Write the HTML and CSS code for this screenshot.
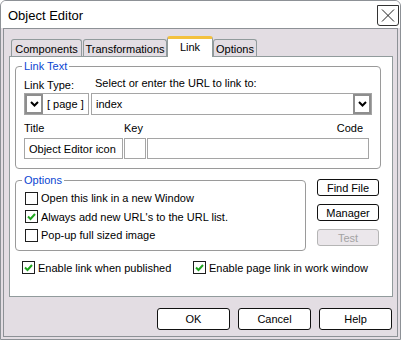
FILE: index.html
```html
<!DOCTYPE html>
<html lang="en">
<head>
  <meta charset="UTF-8">
  <title>Object Editor</title>
  <link rel="stylesheet" href="styles.css">
</head>
<body>

<div class="window">
  <div class="titlebar">
    <span class="title">Object Editor</span>
    <span class="close">
      <svg width="20" height="19" viewBox="0 0 20 19"><path d="M4 3.5 L16 15.5 M16 3.5 L4 15.5" stroke="#222" stroke-width="1" fill="none"/></svg>
    </span>
  </div>

  <div class="frame">
    <div class="tabs">
      <div class="tab tab-components">Components</div>
      <div class="tab tab-transform">Transformations</div>
      <div class="tab tab-active">Link</div>
      <div class="tab tab-options">Options</div>
    </div>

    <div class="panel">
      <fieldset class="group group-link">
        <legend>Link Text</legend>
        <div class="link-grid">
          <span class="lbl lbl-type">Link Type:</span>
          <span class="lbl lbl-url">Select or enter the URL to link to:</span>
          <div class="select">
            <span class="drop"><svg width="9" height="6" viewBox="0 0 9 6"><path d="M1 1 L4.5 4.5 L8 1" stroke="#000" stroke-width="2" fill="none"/></svg></span>
            <span class="select-text">[ page ]</span>
          </div>
          <div class="select">
            <span class="select-text">index</span>
            <span class="drop"><svg width="9" height="6" viewBox="0 0 9 6"><path d="M1 1 L4.5 4.5 L8 1" stroke="#000" stroke-width="2" fill="none"/></svg></span>
          </div>
        </div>
        <div class="field-grid">
          <span class="lbl">Title</span>
          <span class="lbl">Key</span>
          <span class="lbl lbl-code">Code</span>
          <div class="input">Object Editor icon</div>
          <div class="input"></div>
          <div class="input"></div>
        </div>
      </fieldset>

      <div class="options-row">
        <fieldset class="group group-options">
          <legend>Options</legend>
          <div class="check">
            <span class="box"></span>
            <span>Open this link in a new Window</span>
          </div>
          <div class="check">
            <span class="box"><svg width="11" height="11" viewBox="0 0 11 11"><path d="M2 5.5 L4.5 8 L9 3" stroke="#1fa51f" stroke-width="2" fill="none"/></svg></span>
            <span>Always add new URL's to the URL list.</span>
          </div>
          <div class="check">
            <span class="box"></span>
            <span>Pop-up full sized image</span>
          </div>
        </fieldset>

        <div class="side-buttons">
          <button class="btn btn-small">Find File</button>
          <button class="btn btn-small">Manager</button>
          <button class="btn btn-small btn-disabled">Test</button>
        </div>
      </div>

      <div class="enable-row">
        <div class="check check-first">
          <span class="box"><svg width="11" height="11" viewBox="0 0 11 11"><path d="M2 5.5 L4.5 8 L9 3" stroke="#1fa51f" stroke-width="2" fill="none"/></svg></span>
          <span>Enable link when published</span>
        </div>
        <div class="check">
          <span class="box"><svg width="11" height="11" viewBox="0 0 11 11"><path d="M2 5.5 L4.5 8 L9 3" stroke="#1fa51f" stroke-width="2" fill="none"/></svg></span>
          <span>Enable page link in work window</span>
        </div>
      </div>
    </div>

    <div class="footer">
      <button class="btn btn-big">OK</button>
      <button class="btn btn-big">Cancel</button>
      <button class="btn btn-big">Help</button>
    </div>
  </div>
</div>

</body>
</html>
```

FILE: styles.css
```css
body {
  margin: 0;
  font-family: "Liberation Sans", Arial, sans-serif;
  font-size: 11px;
  color: #000;
}
.window {
  width: 401px;
  height: 340px;
  box-sizing: border-box;
  border: 1px solid #8d9196;
  border-radius: 6px 6px 0 0;
  background-color: #e3dde3;
  display: flex;
  flex-direction: column;
  overflow: hidden;
}
.titlebar {
  height: 27px;
  flex: none;
  background-color: #fff;
  display: flex;
  align-items: center;
  justify-content: space-between;
  padding-left: 7px;
}
.title {
  font-size: 13px;
  margin-top: 2px;
}
.close {
  width: 20px;
  height: 19px;
  margin-right: 1px;
  margin-top: 1px;
  border: 1px solid #333;
  border-radius: 0 0 3px 3px;
  display: flex;
}
.frame {
  flex: 1;
  margin: 0 2px 2px;
  border: 1px solid #8d9196;
  padding: 7px 4px 0 5px;
  display: flex;
  flex-direction: column;
}
.tabs {
  height: 20px;
  display: flex;
  align-items: flex-end;
  padding-left: 2px;
}
.tab {
  height: 17px;
  box-sizing: border-box;
  border: 1px solid #919b9c;
  border-bottom: none;
  border-radius: 3px 3px 0 0;
  display: flex;
  align-items: center;
  justify-content: center;
  padding-top: 1px;
}
.tab-components {
  width: 71px;
  margin-right: 1px;
}
.tab-transform {
  width: 84px;
}
.tab-active {
  width: 46px;
  height: 21px;
  margin-bottom: -1px;
  background-color: #fff;
  border-top: 3px solid #f3c13f;
  padding: 0 0 3px;
  position: relative;
  z-index: 1;
}
.tab-options {
  width: 44px;
}
.panel {
  height: 241px;
  box-sizing: border-box;
  background-color: #fff;
  border: 1px solid #919b9c;
}
.group {
  margin: 0;
  min-width: 0;
  border: 1px solid #9a9a9a;
  border-radius: 4px;
}
.group legend {
  color: #0a45d2;
  padding: 0 2px;
  margin-left: -3px;
  line-height: 13px;
}
.group-link {
  margin: 3px 11px 0 5px;
  padding: 0 0 9px 8px;
}
.group-link legend {
  margin-left: -2px;
}
.link-grid {
  display: grid;
  grid-template-columns: 65px 281px;
  grid-template-rows: 20px 22px;
  column-gap: 2px;
}
.lbl {
  line-height: 13px;
  align-self: end;
}
.lbl-type {
  margin-bottom: 1px;
}
.lbl-url {
  margin-bottom: 3px;
  padding-left: 4px;
}
.select {
  display: flex;
  border: 1px solid #a5a5a5;
  background-color: #fff;
}
.drop {
  width: 14px;
  border: 2px solid #8e8e8e;
  display: flex;
  align-items: center;
  justify-content: center;
}
.select-text {
  flex: 1;
  display: flex;
  align-items: center;
  padding-left: 4px;
}
.field-grid {
  display: grid;
  grid-template-columns: 99px 22px 222px;
  grid-template-rows: 23px 21px;
  column-gap: 1px;
}
.field-grid .lbl {
  margin-bottom: 3px;
}
.lbl-code {
  text-align: right;
  padding-right: 6px;
}
.input {
  box-sizing: border-box;
  border: 1px solid #a5a5a5;
  display: flex;
  align-items: center;
  padding-left: 4px;
}
.options-row {
  display: flex;
  align-items: flex-start;
  margin-top: 5px;
}
.group-options {
  width: 291px;
  box-sizing: border-box;
  margin: 0 0 0 5px;
  padding: 2px 0 5px 9px;
}
.check {
  height: 18.5px;
  display: flex;
  align-items: center;
  gap: 3px;
}
.box {
  width: 13px;
  height: 13px;
  box-sizing: border-box;
  border: 1px solid #1e1e1e;
  background-color: #fff;
  display: flex;
  align-items: center;
  justify-content: center;
  flex: none;
}
.side-buttons {
  display: flex;
  flex-direction: column;
  gap: 8px;
  margin: 5px 0 0 11px;
}
.btn {
  font-family: inherit;
  font-size: 11px;
  color: #000;
  background-color: #fff;
  border: 1px solid #111;
  border-radius: 3px;
  padding: 0;
}
.btn-small {
  width: 62px;
  height: 17px;
}
.btn-disabled {
  color: #a3a3a3;
  border-color: #b5b5b5;
  background-color: #ebe7eb;
}
.enable-row {
  display: flex;
  margin-top: 8px;
  padding-left: 12px;
}
.enable-row .check {
  height: 18px;
}
.check-first {
  width: 171px;
}
.footer {
  display: flex;
  justify-content: flex-end;
  gap: 8px;
  margin-top: 11px;
  padding-right: 1px;
}
.btn-big {
  width: 73px;
  height: 22px;
}
```
